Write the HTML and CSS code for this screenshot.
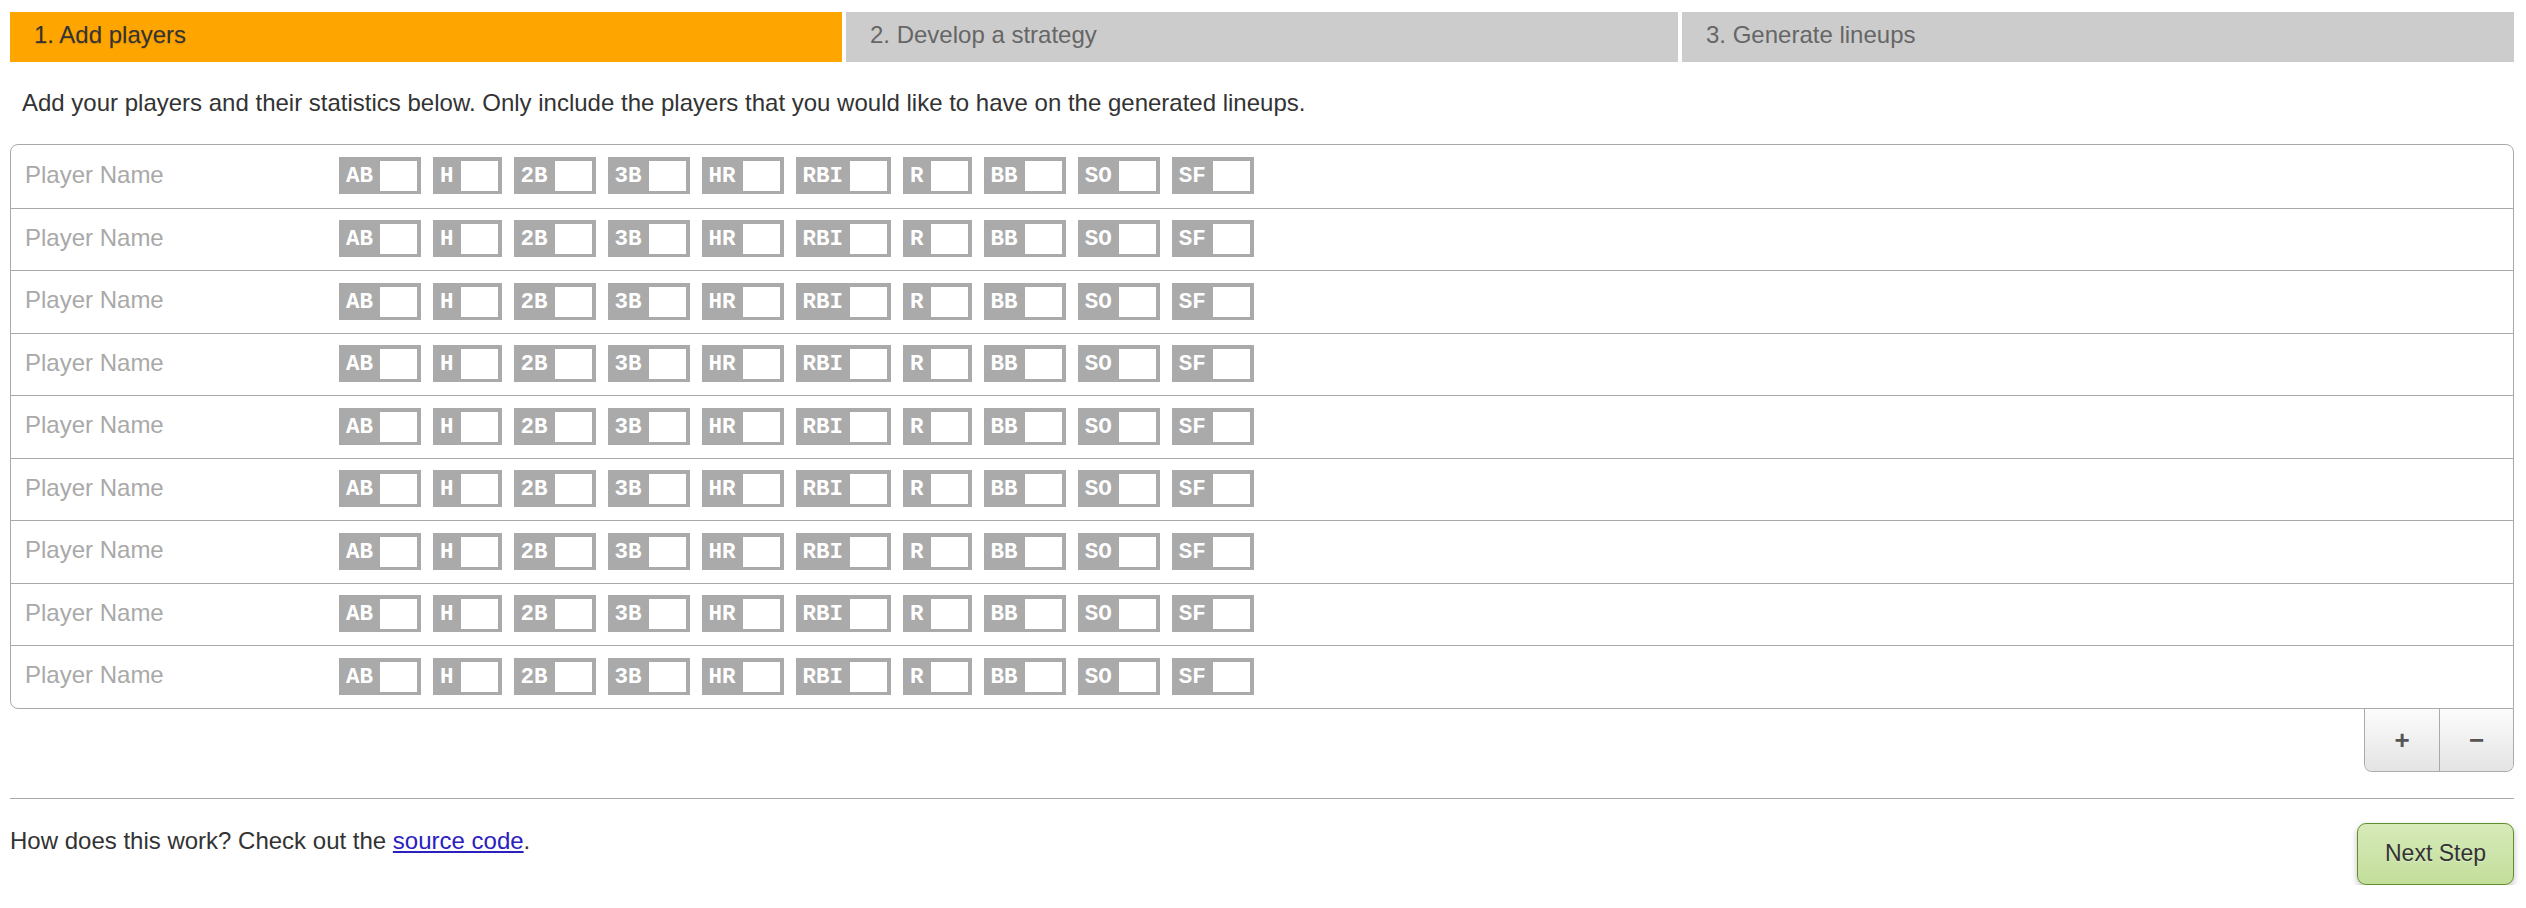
FILE: index.html
```html
<!DOCTYPE html>
<html lang="en">
<head>
<meta charset="utf-8">
<title>Lineup Generator</title>
<link rel="stylesheet" href="styles.css">
</head>
<body>
<div class="page">
  <nav class="steps">
    <div class="step step-active">1. Add players</div>
    <div class="step">2. Develop a strategy</div>
    <div class="step">3. Generate lineups</div>
  </nav>

  <p class="intro">Add your players and their statistics below. Only include the players that you would like to have on the generated lineups.</p>

  <div class="players">
    <div class="player-row">
      <div class="player-name">Player Name</div>
      <div class="stats">
        <div class="stat"><span class="stat-label">AB</span><span class="stat-input"></span></div>
        <div class="stat"><span class="stat-label">H</span><span class="stat-input"></span></div>
        <div class="stat"><span class="stat-label">2B</span><span class="stat-input"></span></div>
        <div class="stat"><span class="stat-label">3B</span><span class="stat-input"></span></div>
        <div class="stat"><span class="stat-label">HR</span><span class="stat-input"></span></div>
        <div class="stat"><span class="stat-label">RBI</span><span class="stat-input"></span></div>
        <div class="stat"><span class="stat-label">R</span><span class="stat-input"></span></div>
        <div class="stat"><span class="stat-label">BB</span><span class="stat-input"></span></div>
        <div class="stat"><span class="stat-label">SO</span><span class="stat-input"></span></div>
        <div class="stat"><span class="stat-label">SF</span><span class="stat-input"></span></div>
      </div>
    </div>
    <div class="player-row">
      <div class="player-name">Player Name</div>
      <div class="stats">
        <div class="stat"><span class="stat-label">AB</span><span class="stat-input"></span></div>
        <div class="stat"><span class="stat-label">H</span><span class="stat-input"></span></div>
        <div class="stat"><span class="stat-label">2B</span><span class="stat-input"></span></div>
        <div class="stat"><span class="stat-label">3B</span><span class="stat-input"></span></div>
        <div class="stat"><span class="stat-label">HR</span><span class="stat-input"></span></div>
        <div class="stat"><span class="stat-label">RBI</span><span class="stat-input"></span></div>
        <div class="stat"><span class="stat-label">R</span><span class="stat-input"></span></div>
        <div class="stat"><span class="stat-label">BB</span><span class="stat-input"></span></div>
        <div class="stat"><span class="stat-label">SO</span><span class="stat-input"></span></div>
        <div class="stat"><span class="stat-label">SF</span><span class="stat-input"></span></div>
      </div>
    </div>
    <div class="player-row">
      <div class="player-name">Player Name</div>
      <div class="stats">
        <div class="stat"><span class="stat-label">AB</span><span class="stat-input"></span></div>
        <div class="stat"><span class="stat-label">H</span><span class="stat-input"></span></div>
        <div class="stat"><span class="stat-label">2B</span><span class="stat-input"></span></div>
        <div class="stat"><span class="stat-label">3B</span><span class="stat-input"></span></div>
        <div class="stat"><span class="stat-label">HR</span><span class="stat-input"></span></div>
        <div class="stat"><span class="stat-label">RBI</span><span class="stat-input"></span></div>
        <div class="stat"><span class="stat-label">R</span><span class="stat-input"></span></div>
        <div class="stat"><span class="stat-label">BB</span><span class="stat-input"></span></div>
        <div class="stat"><span class="stat-label">SO</span><span class="stat-input"></span></div>
        <div class="stat"><span class="stat-label">SF</span><span class="stat-input"></span></div>
      </div>
    </div>
    <div class="player-row">
      <div class="player-name">Player Name</div>
      <div class="stats">
        <div class="stat"><span class="stat-label">AB</span><span class="stat-input"></span></div>
        <div class="stat"><span class="stat-label">H</span><span class="stat-input"></span></div>
        <div class="stat"><span class="stat-label">2B</span><span class="stat-input"></span></div>
        <div class="stat"><span class="stat-label">3B</span><span class="stat-input"></span></div>
        <div class="stat"><span class="stat-label">HR</span><span class="stat-input"></span></div>
        <div class="stat"><span class="stat-label">RBI</span><span class="stat-input"></span></div>
        <div class="stat"><span class="stat-label">R</span><span class="stat-input"></span></div>
        <div class="stat"><span class="stat-label">BB</span><span class="stat-input"></span></div>
        <div class="stat"><span class="stat-label">SO</span><span class="stat-input"></span></div>
        <div class="stat"><span class="stat-label">SF</span><span class="stat-input"></span></div>
      </div>
    </div>
    <div class="player-row">
      <div class="player-name">Player Name</div>
      <div class="stats">
        <div class="stat"><span class="stat-label">AB</span><span class="stat-input"></span></div>
        <div class="stat"><span class="stat-label">H</span><span class="stat-input"></span></div>
        <div class="stat"><span class="stat-label">2B</span><span class="stat-input"></span></div>
        <div class="stat"><span class="stat-label">3B</span><span class="stat-input"></span></div>
        <div class="stat"><span class="stat-label">HR</span><span class="stat-input"></span></div>
        <div class="stat"><span class="stat-label">RBI</span><span class="stat-input"></span></div>
        <div class="stat"><span class="stat-label">R</span><span class="stat-input"></span></div>
        <div class="stat"><span class="stat-label">BB</span><span class="stat-input"></span></div>
        <div class="stat"><span class="stat-label">SO</span><span class="stat-input"></span></div>
        <div class="stat"><span class="stat-label">SF</span><span class="stat-input"></span></div>
      </div>
    </div>
    <div class="player-row">
      <div class="player-name">Player Name</div>
      <div class="stats">
        <div class="stat"><span class="stat-label">AB</span><span class="stat-input"></span></div>
        <div class="stat"><span class="stat-label">H</span><span class="stat-input"></span></div>
        <div class="stat"><span class="stat-label">2B</span><span class="stat-input"></span></div>
        <div class="stat"><span class="stat-label">3B</span><span class="stat-input"></span></div>
        <div class="stat"><span class="stat-label">HR</span><span class="stat-input"></span></div>
        <div class="stat"><span class="stat-label">RBI</span><span class="stat-input"></span></div>
        <div class="stat"><span class="stat-label">R</span><span class="stat-input"></span></div>
        <div class="stat"><span class="stat-label">BB</span><span class="stat-input"></span></div>
        <div class="stat"><span class="stat-label">SO</span><span class="stat-input"></span></div>
        <div class="stat"><span class="stat-label">SF</span><span class="stat-input"></span></div>
      </div>
    </div>
    <div class="player-row">
      <div class="player-name">Player Name</div>
      <div class="stats">
        <div class="stat"><span class="stat-label">AB</span><span class="stat-input"></span></div>
        <div class="stat"><span class="stat-label">H</span><span class="stat-input"></span></div>
        <div class="stat"><span class="stat-label">2B</span><span class="stat-input"></span></div>
        <div class="stat"><span class="stat-label">3B</span><span class="stat-input"></span></div>
        <div class="stat"><span class="stat-label">HR</span><span class="stat-input"></span></div>
        <div class="stat"><span class="stat-label">RBI</span><span class="stat-input"></span></div>
        <div class="stat"><span class="stat-label">R</span><span class="stat-input"></span></div>
        <div class="stat"><span class="stat-label">BB</span><span class="stat-input"></span></div>
        <div class="stat"><span class="stat-label">SO</span><span class="stat-input"></span></div>
        <div class="stat"><span class="stat-label">SF</span><span class="stat-input"></span></div>
      </div>
    </div>
    <div class="player-row">
      <div class="player-name">Player Name</div>
      <div class="stats">
        <div class="stat"><span class="stat-label">AB</span><span class="stat-input"></span></div>
        <div class="stat"><span class="stat-label">H</span><span class="stat-input"></span></div>
        <div class="stat"><span class="stat-label">2B</span><span class="stat-input"></span></div>
        <div class="stat"><span class="stat-label">3B</span><span class="stat-input"></span></div>
        <div class="stat"><span class="stat-label">HR</span><span class="stat-input"></span></div>
        <div class="stat"><span class="stat-label">RBI</span><span class="stat-input"></span></div>
        <div class="stat"><span class="stat-label">R</span><span class="stat-input"></span></div>
        <div class="stat"><span class="stat-label">BB</span><span class="stat-input"></span></div>
        <div class="stat"><span class="stat-label">SO</span><span class="stat-input"></span></div>
        <div class="stat"><span class="stat-label">SF</span><span class="stat-input"></span></div>
      </div>
    </div>
    <div class="player-row">
      <div class="player-name">Player Name</div>
      <div class="stats">
        <div class="stat"><span class="stat-label">AB</span><span class="stat-input"></span></div>
        <div class="stat"><span class="stat-label">H</span><span class="stat-input"></span></div>
        <div class="stat"><span class="stat-label">2B</span><span class="stat-input"></span></div>
        <div class="stat"><span class="stat-label">3B</span><span class="stat-input"></span></div>
        <div class="stat"><span class="stat-label">HR</span><span class="stat-input"></span></div>
        <div class="stat"><span class="stat-label">RBI</span><span class="stat-input"></span></div>
        <div class="stat"><span class="stat-label">R</span><span class="stat-input"></span></div>
        <div class="stat"><span class="stat-label">BB</span><span class="stat-input"></span></div>
        <div class="stat"><span class="stat-label">SO</span><span class="stat-input"></span></div>
        <div class="stat"><span class="stat-label">SF</span><span class="stat-input"></span></div>
      </div>
    </div>
  </div>

  <div class="row-controls">
    <div class="btn-group">
      <button class="btn-small">+</button>
      <button class="btn-small">&minus;</button>
    </div>
  </div>

  <hr class="divider">

  <div class="footer">
    <p class="footer-text">How does this work? Check out the <a href="#" class="footer-link">source code</a>.</p>
    <button class="btn-next">Next Step</button>
  </div>
</div>
</body>
</html>
```

FILE: styles.css
```css
* {
  box-sizing: border-box;
}

html, body {
  margin: 0;
  padding: 0;
  background: #fff;
}

body {
  font-family: "Liberation Sans", Arial, Helvetica, sans-serif;
  color: #333;
}

.page {
  padding: 12px 12px 0 10px;
}

/* Step tabs */
.steps {
  display: grid;
  grid-template-columns: 1fr 1fr 1fr;
  gap: 4px;
}

.step {
  height: 50px;
  line-height: 45px;
  padding-left: 24px;
  background: #ccc;
  color: #666;
  font-size: 24px;
  white-space: nowrap;
}

.step-active {
  background: #ffa500;
  color: #333;
  text-shadow: 0 1px 1px rgba(0, 0, 0, 0.15);
}

/* Intro paragraph */
.intro {
  margin: 27px 0 27px 12px;
  font-size: 24px;
  line-height: 28px;
  color: #333;
}

/* Players table */
.players {
  border: 1px solid #aaa;
  border-radius: 8px 8px 0 8px;
}

.player-row {
  display: flex;
  align-items: center;
  height: 62.5px;
  padding-left: 14px;
}

.player-row + .player-row {
  border-top: 1px solid #aaa;
}

.player-name {
  flex: 0 0 314px;
  font-size: 24px;
  line-height: 28px;
  color: #a9a9a9;
  padding-bottom: 3px;
}

.stats {
  display: flex;
  gap: 12px;
  margin-top: -1px;
}

.stat {
  display: flex;
  align-items: center;
  background: #aaa;
  padding: 4px 4px 3px 0;
}

.stat-label {
  padding: 0 7px;
  font-family: "Liberation Mono", "Courier New", monospace;
  font-weight: bold;
  font-size: 22.5px;
  line-height: 30px;
  color: #fff;
}

.stat-input {
  display: block;
  width: 37px;
  height: 30px;
  background: #fff;
}

/* +/- controls */
.row-controls {
  display: flex;
  justify-content: flex-end;
}

.btn-group {
  display: flex;
  border: 1px solid #aaa;
  border-top: none;
  border-radius: 0 0 8px 8px;
  overflow: hidden;
}

.btn-small {
  width: 74px;
  height: 62px;
  border: none;
  margin: 0;
  padding: 0;
  background: linear-gradient(#fcfcfc, #e4e4e4);
  color: #555;
  font-family: "Liberation Sans", Arial, sans-serif;
  font-weight: bold;
  font-size: 26px;
  line-height: 62px;
}

.btn-small + .btn-small {
  border-left: 1px solid #aaa;
}

/* Divider */
.divider {
  margin: 26px 0 0 0;
  border: none;
  border-top: 1px solid #aaa;
  height: 0;
}

/* Footer */
.footer {
  display: flex;
  justify-content: space-between;
  align-items: flex-start;
  padding-top: 24px;
}

.footer-text {
  margin: 0;
  padding-top: 4px;
  font-size: 24px;
  line-height: 28px;
  color: #333;
}

.footer-link {
  color: #2a20c0;
  text-decoration: underline;
}

.btn-next {
  width: 157px;
  height: 62px;
  margin: 0;
  padding: 0;
  border: 1px solid #5f8f2f;
  border-radius: 9px;
  background: linear-gradient(#d6eab9, #c3de9a);
  box-shadow: 0 3px 6px rgba(0, 0, 0, 0.25);
  color: #333;
  font-family: "Liberation Sans", Arial, sans-serif;
  font-size: 23px;
  text-shadow: 0 1px 0 rgba(255, 255, 255, 0.4);
}
```
